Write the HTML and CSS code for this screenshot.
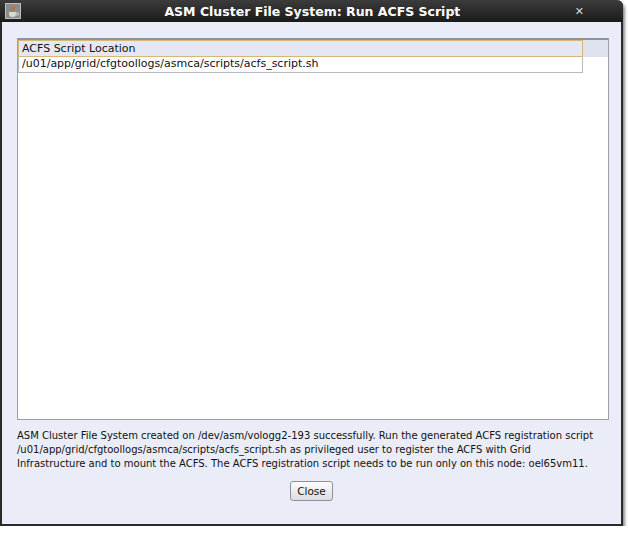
FILE: index.html
```html
<!DOCTYPE html>
<html lang="en">

<head>
    <meta charset="UTF-8">
    <title>ASM Cluster File System: Run ACFS Script</title>
    <link rel="stylesheet" href="styles.css">
</head>

<body>
    <div class="window">
        <div class="titlebar">
            <span class="app-icon">
                <svg width="16" height="16" viewBox="0 0 16 16">
                    <rect x="0.5" y="0.5" width="15" height="15" fill="#8c8c8c" stroke="#bdbdbd" />
                    <path d="M4 9 h7 v2 a3 3 0 0 1 -3 3 h-1 a3 3 0 0 1 -3 -3z" fill="#d8d8d8" />
                    <path d="M11 10 h1.5 a1 1 0 0 1 0 2 h-1.5" fill="none" stroke="#d8d8d8" />
                    <path d="M6 8 c-1 -2 2 -2 1 -4 M8.5 8 c-1 -2 2 -2 1 -4" fill="none" stroke="#e05a20" stroke-width="1.2" />
                </svg>
            </span>
            <span class="title">ASM Cluster File System: Run ACFS Script</span>
            <span class="close-x">&#x2715;</span>
        </div>
        <div class="content">
            <div class="table-pane">
                <div class="header-row">
                    <div class="header-cell">ACFS Script Location</div>
                    <div class="header-filler"></div>
                </div>
                <div class="data-row">/u01/app/grid/cfgtoollogs/asmca/scripts/acfs_script.sh</div>
            </div>
            <p class="message">ASM Cluster File System created on /dev/asm/vologg2-193 successfully. Run the generated ACFS registration script /u01/app/grid/cfgtoollogs/asmca/scripts/acfs_script.sh as privileged user to register the ACFS with Grid Infrastructure and to mount the ACFS. The ACFS registration script needs to be run only on this node: oel65vm11.</p>
            <div class="button-row">
                <button class="close-button">Close</button>
            </div>
        </div>
    </div>
</body>

</html>
```

FILE: styles.css
```css
/* Dialog window */
body {
    margin: 0;
    padding: 0;
    background-color: #fff;
    font-family: "DejaVu Sans", sans-serif;
}

.window {
    width: 619px;
    height: 524px;
    border: 2px solid #2a2a2a;
    border-top: none;
    border-top-right-radius: 6px;
    background-color: #eaedf7;
    box-shadow: 2px 3px 3px rgba(0, 0, 0, 0.45);
    display: flex;
    flex-direction: column;
}

.titlebar {
    height: 22px;
    margin: 0 -2px;
    background: linear-gradient(#3c3c3c, #1a1a1a);
    border-top-right-radius: 6px;
    display: flex;
    align-items: center;
    color: #fff;
}

.app-icon {
    width: 16px;
    height: 16px;
    margin-left: 5px;
    display: flex;
}

.title {
    flex: 1;
    text-align: center;
    font-weight: bold;
    font-size: 12.5px;
    padding-left: 29px;
}

.close-x {
    font-size: 11px;
    font-weight: bold;
    color: #d8d8d8;
    margin-right: 39px;
}

.content {
    flex: 1;
    padding: 16px 12px 0 15px;
}

.table-pane {
    height: 379px;
    border: 1px solid #9a9ea8;
    border-top: 2px solid #8e939c;
    background-color: #fff;
}

.header-row {
    display: flex;
    height: 17px;
}

.header-cell {
    width: 560px;
    border: 1px solid #d6b77a;
    background-color: #e5e8f3;
    font-size: 11px;
    line-height: 15px;
    padding-left: 3px;
    color: #111;
}

.header-filler {
    flex: 1;
    background-color: #dfe3ef;
}

.data-row {
    width: 560px;
    height: 15px;
    border: 1px solid #b8bac0;
    border-top: none;
    font-size: 11px;
    line-height: 14px;
    padding-left: 3px;
    color: #111;
}

.message {
    margin: 9px 0 0 0;
    padding-right: 10px;
    font-size: 10px;
    line-height: 14px;
    color: #111;
}

.button-row {
    display: flex;
    justify-content: center;
    margin-top: 10px;
    padding-right: 3px;
}

.close-button {
    font-family: "DejaVu Sans", sans-serif;
    font-size: 10.5px;
    color: #111;
    height: 20px;
    padding: 0 6px;
    border: 1px solid #8d9099;
    border-radius: 3px;
    background: linear-gradient(#fdfdfd, #dcdde2);
}
```
